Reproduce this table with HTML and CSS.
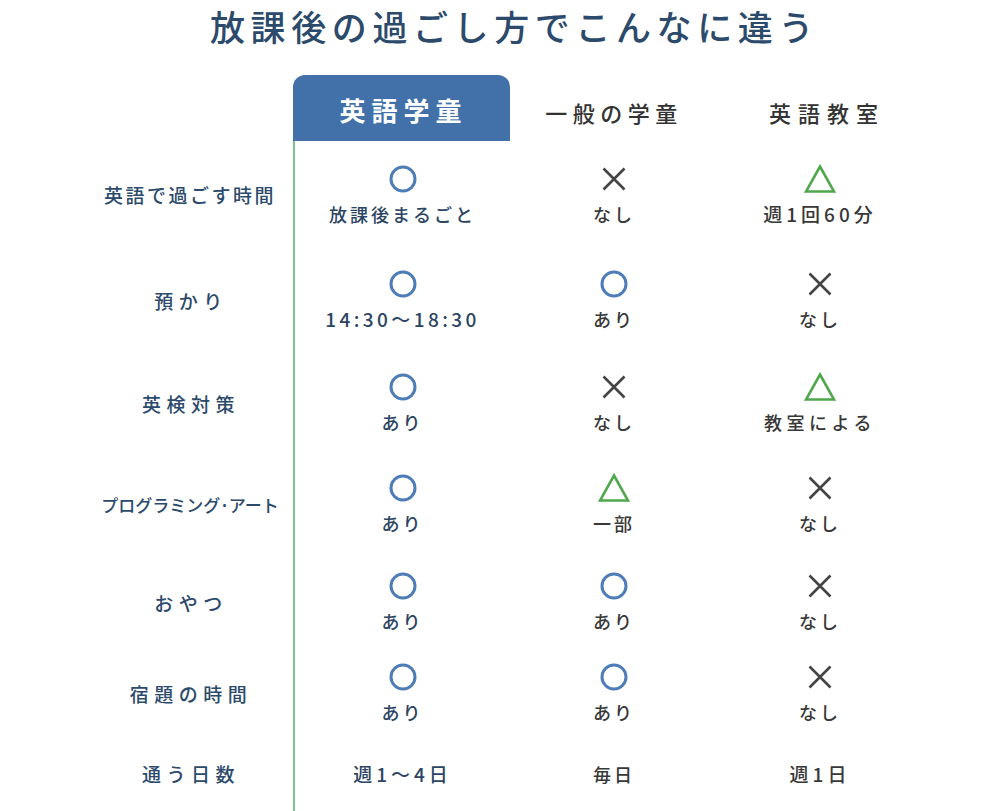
FILE: index.html
```html
<!DOCTYPE html>
<html lang="ja">
<head>
<meta charset="utf-8">
<title>放課後の過ごし方でこんなに違う</title>
<link rel="stylesheet" href="styles.css">
</head>
<body>
<h1 class="title">放課後の過ごし方でこんなに違う</h1>
<div class="table">
  <div class="cell head-empty"></div>
  <div class="cell head-main">英語学童</div>
  <div class="cell head">一般の学童</div>
  <div class="cell head head--last">英語教室</div>

  <div class="cell label label--tight">英語で過ごす時間</div>
  <div class="cell main"><svg class="ic" viewBox="0 0 32 30"><circle class="ic-o" cx="16" cy="15" r="12"/></svg><span class="val">放課後まるごと</span></div>
  <div class="cell"><svg class="ic" viewBox="0 0 32 30"><path class="ic-x" d="M5.5 4.5 L26.5 25.5 M26.5 4.5 L5.5 25.5"/></svg><span class="val">なし</span></div>
  <div class="cell"><svg class="ic" viewBox="0 0 32 30"><path class="ic-t" d="M16 2.5 L30 27.5 L2 27.5 Z"/></svg><span class="val val--num">週1回60分</span></div>

  <div class="cell label">預かり</div>
  <div class="cell main"><svg class="ic" viewBox="0 0 32 30"><circle class="ic-o" cx="16" cy="15" r="12"/></svg><span class="val val--time">14:30〜18:30</span></div>
  <div class="cell"><svg class="ic" viewBox="0 0 32 30"><circle class="ic-o" cx="16" cy="15" r="12"/></svg><span class="val">あり</span></div>
  <div class="cell"><svg class="ic" viewBox="0 0 32 30"><path class="ic-x" d="M5.5 4.5 L26.5 25.5 M26.5 4.5 L5.5 25.5"/></svg><span class="val">なし</span></div>

  <div class="cell label">英検対策</div>
  <div class="cell main"><svg class="ic" viewBox="0 0 32 30"><circle class="ic-o" cx="16" cy="15" r="12"/></svg><span class="val">あり</span></div>
  <div class="cell"><svg class="ic" viewBox="0 0 32 30"><path class="ic-x" d="M5.5 4.5 L26.5 25.5 M26.5 4.5 L5.5 25.5"/></svg><span class="val">なし</span></div>
  <div class="cell"><svg class="ic" viewBox="0 0 32 30"><path class="ic-t" d="M16 2.5 L30 27.5 L2 27.5 Z"/></svg><span class="val val--wide">教室による</span></div>

  <div class="cell label label--kana">プログラミング･アート</div>
  <div class="cell main"><svg class="ic" viewBox="0 0 32 30"><circle class="ic-o" cx="16" cy="15" r="12"/></svg><span class="val">あり</span></div>
  <div class="cell"><svg class="ic" viewBox="0 0 32 30"><path class="ic-t" d="M16 2.5 L30 27.5 L2 27.5 Z"/></svg><span class="val">一部</span></div>
  <div class="cell"><svg class="ic" viewBox="0 0 32 30"><path class="ic-x" d="M5.5 4.5 L26.5 25.5 M26.5 4.5 L5.5 25.5"/></svg><span class="val">なし</span></div>

  <div class="cell label">おやつ</div>
  <div class="cell main"><svg class="ic" viewBox="0 0 32 30"><circle class="ic-o" cx="16" cy="15" r="12"/></svg><span class="val">あり</span></div>
  <div class="cell"><svg class="ic" viewBox="0 0 32 30"><circle class="ic-o" cx="16" cy="15" r="12"/></svg><span class="val">あり</span></div>
  <div class="cell"><svg class="ic" viewBox="0 0 32 30"><path class="ic-x" d="M5.5 4.5 L26.5 25.5 M26.5 4.5 L5.5 25.5"/></svg><span class="val">なし</span></div>

  <div class="cell label">宿題の時間</div>
  <div class="cell main"><svg class="ic" viewBox="0 0 32 30"><circle class="ic-o" cx="16" cy="15" r="12"/></svg><span class="val">あり</span></div>
  <div class="cell"><svg class="ic" viewBox="0 0 32 30"><circle class="ic-o" cx="16" cy="15" r="12"/></svg><span class="val">あり</span></div>
  <div class="cell"><svg class="ic" viewBox="0 0 32 30"><path class="ic-x" d="M5.5 4.5 L26.5 25.5 M26.5 4.5 L5.5 25.5"/></svg><span class="val">なし</span></div>

  <div class="cell label">通う日数</div>
  <div class="cell main"><span class="val val--num">週1〜4日</span></div>
  <div class="cell"><span class="val">毎日</span></div>
  <div class="cell"><span class="val val--num">週1日</span></div>
</div>
</body>
</html>
```
FILE: styles.css
```css
html, body {
  margin: 0;
  padding: 0;
  background: #ffffff;
}
body {
  width: 983px;
  min-height: 811px;
  font-family: "Noto Sans CJK JP", "Noto Sans", sans-serif;
  color: #333333;
}
.title {
  margin: 0 0 23px 0;
  padding: 0 0 0 46px;
  height: 52px;
  line-height: 52px;
  font-size: 35px;
  font-weight: 500;
  letter-spacing: 5.6px;
  color: #2c4a6b;
  text-align: center;
  white-space: nowrap;
}
.table {
  display: grid;
  margin-left: 87px;
  grid-template-columns: 206px 217px 208px 204px;
  grid-template-rows: 66px 107px 104px 102px 100px 96px 86px 75px;
}
.cell {
  display: flex;
  flex-direction: column;
  align-items: center;
  justify-content: center;
  gap: 8px;
}
.head-main {
  background: #4271a9;
  border-radius: 12px 12px 0 0;
  color: #ffffff;
  font-size: 26px;
  font-weight: 700;
  letter-spacing: 6px;
  padding-top: 2px;
  padding-left: 4px;
}
.head {
  font-size: 22px;
  font-weight: 500;
  letter-spacing: 5.5px;
  color: #333333;
  padding-top: 8px;
}
.head--last {
  letter-spacing: 7px;
  padding-left: 14px;
}
.label {
  font-size: 19px;
  font-weight: 500;
  letter-spacing: 5.5px;
  color: #2c4a6b;
  padding-left: 2px;
}
.label--tight {
  letter-spacing: 2.5px;
  padding-left: 0;
}
.label--kana {
  font-size: 17px;
  letter-spacing: 0;
  padding-left: 0;
}
.main {
  border-left: 2px solid #7cc48f;
}
.main .val {
  color: #2c4563;
}
.val {
  font-size: 18px;
  line-height: 24px;
  font-weight: 500;
  letter-spacing: 3px;
  color: #383838;
}
.val--num {
  letter-spacing: 4px;
  font-size: 19px;
}
.val--time {
  letter-spacing: 3.4px;
  font-size: 19px;
}
.val--wide {
  letter-spacing: 4.5px;
}
.ic {
  width: 32px;
  height: 30px;
  display: block;
}
.ic-o {
  fill: none;
  stroke: #4d7cb8;
  stroke-width: 3;
}
.ic-x {
  fill: none;
  stroke: #444444;
  stroke-width: 2.6;
}
.ic-t {
  fill: none;
  stroke: #4fa84c;
  stroke-width: 2.6;
  stroke-linejoin: miter;
}
```
